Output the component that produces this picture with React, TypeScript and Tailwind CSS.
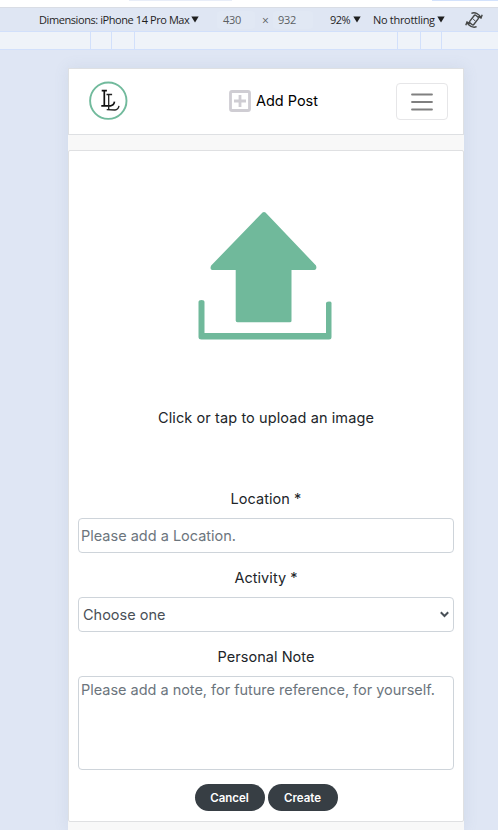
import type { ReactNode } from 'react';

function Ruler() {
  return (
    <div className="flex h-[19px] shrink-0 border-y border-[#d2e0fb] bg-[#eff3f9]">
      <div className="w-[91px] border-r border-[#d2e0fb]" />
      <div className="w-[21px] border-r border-[#d2e0fb]" />
      <div className="w-[23px] border-r border-[#d2e0fb]" />
      <div className="w-[263px] border-r border-[#d2e0fb]" />
      <div className="w-[23px] border-r border-[#d2e0fb]" />
      <div className="w-[21px] border-r border-[#d2e0fb]" />
    </div>
  );
}

function Caret() {
  return (
    <svg width="8" height="7" viewBox="0 0 8 7" className="shrink-0">
      <path d="M.3.5h7.4L4 6.6Z" fill="#1f1f1f" />
    </svg>
  );
}

function RotateIcon() {
  return (
    <svg width="18" height="18" viewBox="0 0 18 18" fill="none" stroke="#454746" strokeWidth="1.4" className="shrink-0">
      <rect x="6.4" y="4.2" width="5.2" height="9.6" rx="1.4" transform="rotate(38 9 9)" />
      <path d="M7.8 7.6l2.6 2.6" strokeWidth="1" />
      <path d="M6.4 2.3C10 .9 14.6 2.800 15.900 6.800M12.600 5.400l3.400 1.600 1.200-3.200M11.600 15.700C8 17.100 3.400 15.200 2.100 11.200M5.400 12.600l-3.400-1.600-1.200 3.200" />
    </svg>
  );
}

function Toolbar() {
  return (
    <div className="flex h-[24px] shrink-0 items-center border-t border-[#d9dde5] bg-[#dfe6f3] pl-[39px] font-['Open_Sans',sans-serif] text-[11px] whitespace-nowrap text-[#1f1f1f]">
      <span className="w-[152px] pt-px tracking-[-0.42px]">Dimensions: iPhone 14 Pro Max</span>
      <Caret />
      <span className="ml-[18px] flex h-[18px] w-[38px] items-center rounded bg-[#e1e8f4] pt-px pl-[6px] tracking-[-0.3px] text-[#5c5f63]">430</span>
      <span className="ml-[7px] w-[11px] pt-[2px] text-[12px] text-[#5c5f63]">×</span>
      <span className="flex h-[18px] w-[40px] items-center rounded bg-[#e1e8f4] pt-px pl-[5px] tracking-[-0.3px] text-[#5c5f63]">932</span>
      <span className="ml-[17px] w-[23px] pt-px tracking-[-0.5px]">92%</span>
      <Caret />
      <span className="ml-[12px] w-[64px] pt-px tracking-[-0.3px]">No throttling</span>
      <Caret />
      <span className="ml-[20px]"><RotateIcon /></span>
    </div>
  );
}

function Logo() {
  return (
    <svg width="40" height="40" viewBox="0 0 40 40" fill="none" className="shrink-0">
      <circle cx="20.3" cy="19.7" r="18.2" stroke="#71ba9c" strokeWidth="1.9" />
      <path d="M13.7 9.6h5.2M16.3 9.6v15.2M13.3 24.8h9.3c2.4-.2 3.5-1.9 3.9-4.1" stroke="#111" strokeWidth="1.7" />
      <path d="M18.5 13.5h5.6M20.7 13.5v15M18.7 28.6l8.3.4c2.6-.2 3.6-2.1 4-4.1" stroke="#222" strokeWidth="1.3" />
    </svg>
  );
}

function Header() {
  return (
    <header className="flex h-[67px] shrink-0 items-center border border-[#dee0e3] bg-white">
      <div className="ml-[19px] -mt-[2px]"><Logo /></div>
      <div className="ml-[101px] flex -translate-y-[1px] items-center">
        <svg width="22" height="22" viewBox="0 0 22 22" fill="none" stroke="#cfcdd3">
          <rect x="1.5" y="1.5" width="19" height="19" rx="1.5" strokeWidth="2.8" />
          <path d="M11 5v12M5 11h12" strokeWidth="2.8" />
        </svg>
        <span className="ml-[5px] w-[63px] text-[14.5px] tracking-[-0.02px] whitespace-nowrap text-black">Add Post</span>
      </div>
      <button className="mr-[15px] ml-auto flex h-[37px] w-[52px] items-center justify-center rounded border border-[#e6e6e8]">
        <svg width="22" height="18" viewBox="0 0 22 18" stroke="#808080" strokeWidth="1.8" strokeLinecap="round">
          <path d="M1 1.5h20M1 9h20M1 16.5h20" />
        </svg>
      </button>
    </header>
  );
}

function UploadArea() {
  return (
    <div className="flex h-[308px] flex-col items-center">
      <svg width="136" height="130" viewBox="0 0 136 130" className="mt-[60px] -ml-[2px] shrink-0" fill="#70b99b">
        <path d="M65.500 1.500Q67 .700 68.500 1.500L119 54.500q1.300 4-1.500 4.500H94.500V110q0 1.300-1.800 1.300H40.500q-1.800 0-1.800-1.800V59H15q-2.500-1-.800-4.500Z" />
        <path d="M1.500 91q0-2 3-2t3 2V122H129V92.500q0-2 3-2t2.500 2V126q0 2.500-2.500 2.500H4.500Q1.500 128.500 1.500 126Z" />
      </svg>
      <p className="mt-[66px] text-[14.5px] leading-[22px] tracking-[0.1px] whitespace-nowrap">Click or tap to upload an image</p>
    </div>
  );
}

function Label({ children }: { children: ReactNode }) {
  return <label className="mb-[8px] block h-[22px] text-center text-[14.5px] leading-[22px] tracking-[0.05px]">{children}</label>;
}

export default function App() {
  return (
    <div className="flex h-[830px] w-[498px] flex-col overflow-hidden bg-[#dfe6f4]">
      <div className="flex h-[7px] shrink-0 items-start bg-white">
        <div className="ml-[129px] h-px w-[103px] bg-[#e8edf8]" />
        <div className="ml-[200px] h-px w-[66px] bg-[#d3e2fc]" />
      </div>
      <Toolbar />
      <Ruler />
      <main className="mt-[18px] ml-[68px] flex h-[762px] w-[396px] shrink-0 flex-col bg-[#f8f8f8] font-['Inter',sans-serif] text-[#212529] shadow-[0_0_14px_rgba(100,120,160,0.12)]">
        <Header />
        <section className="mt-[15px] h-[672px] shrink-0 rounded-[2px] border border-[#dfe0e2] bg-white px-[9px]">
          <UploadArea />
          <div className="mt-[29px]">
            <Label>Location *</Label>
            <input placeholder="Please add a Location." className="block h-[35px] w-full rounded border border-[#ced4da] px-[2px] text-[14.5px] placeholder:text-[#6c757d]" />
          </div>
          <div className="mt-[14px]">
            <Label>Activity *</Label>
            <div className="flex h-[35px] items-center justify-between rounded border border-[#ced4da] pr-[4px] pl-[4px] text-[14.5px] text-[#495057]">
              <span>Choose one</span>
              <svg width="9" height="7" viewBox="0 0 9 7" fill="none" stroke="#495057" strokeWidth="2"><path d="m.8 1.3 3.7 3.7 3.7-3.7" /></svg>
            </div>
          </div>
          <div className="mt-[14px]">
            <Label>Personal Note</Label>
            <textarea placeholder="Please add a note, for future reference, for yourself." className="block h-[94px] w-full resize-none overflow-hidden rounded border border-[#ced4da] px-[2px] py-[2px] text-[14.5px] leading-[22px] tracking-[-0.02px] placeholder:text-[#6c757d]" />
          </div>
          <div className="mt-[14px] flex justify-center gap-[3px]">
            <button className="h-[27px] w-[70px] rounded-full bg-[#373e44] pt-[2px] text-[11.5px] font-semibold text-white">Cancel</button>
            <button className="h-[27px] w-[70px] rounded-full bg-[#373e44] pt-[2px] text-[11.5px] font-semibold text-white">Create</button>
          </div>
        </section>
      </main>
    </div>
  );
}
